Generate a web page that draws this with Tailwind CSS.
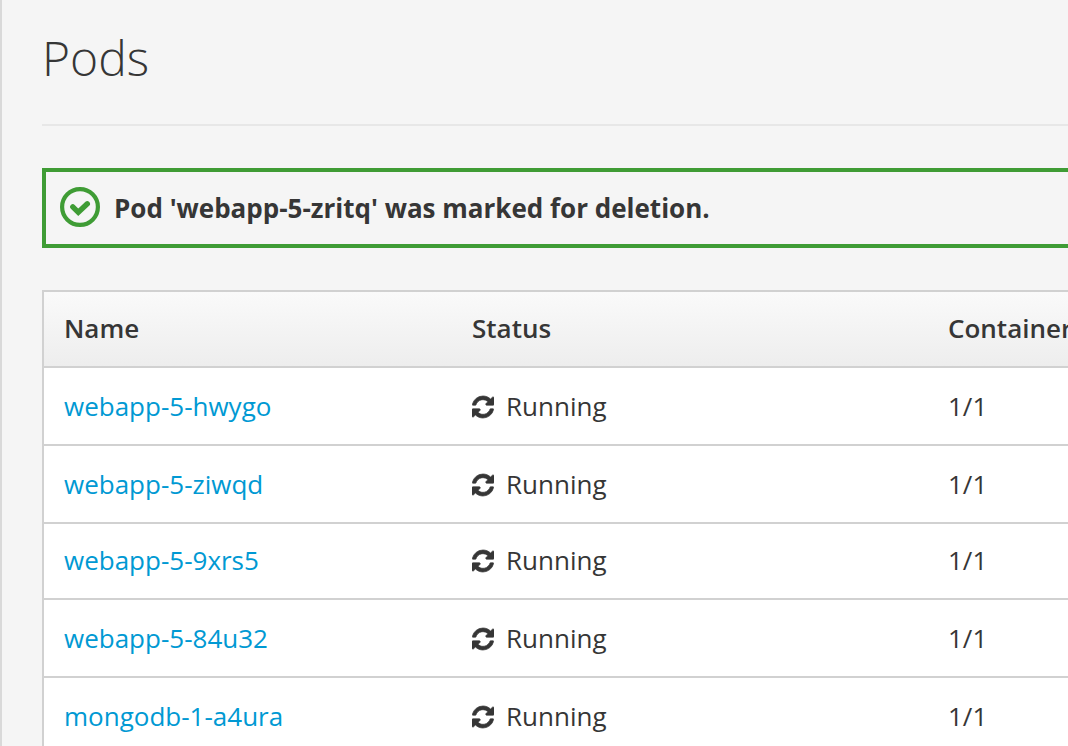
<!DOCTYPE html>
<html lang="en">
<head>
<meta charset="utf-8">
<meta name="viewport" content="width=device-width, initial-scale=1">
<title>Pods</title>
<script src="https://cdn.jsdelivr.net/npm/@tailwindcss/browser@4"></script>
</head>
<body class="h-screen overflow-hidden border-l-2 border-[#d9d9d9] bg-[#f5f5f5] pl-10 font-['Open_Sans','Noto_Sans',sans-serif] text-[26px] leading-9 text-[#363636]">
<svg class="hidden" aria-hidden="true">
  <symbol id="refresh" viewBox="0 0 1536 1792"><path d="M1511 1056q0 5-1 7-64 268-268 434.500T764 1664q-146 0-282.500-55T238 1452l-129 129q-19 19-45 19t-45-19-19-45v-448q0-26 19-45t45-19h448q26 0 45 19t19 45-19 45l-137 137q71 66 161 102t187 36q134 0 250-65t186-179q11-17 53-117 8-23 30-23h192q13 0 22.500 9.500t9.500 22.500zm25-800v448q0 26-19 45t-45 19h-448q-26 0-45-19t-19-45 19-45l138-138Q969 384 768 384q-134 0-250 65T332 628q-11 17-53 117-8 23-30 23H50q-13 0-22.500-9.500T18 736v-7q65-268 270-434.500T768 128q146 0 284 55.500T1297 340l130-129q19-19 45-19t45 19 19 45z" fill="currentColor" stroke="currentColor" stroke-width="50"/></symbol>
</svg>
<main>
  <h1 class="border-b-2 border-[#e7e7e7] pt-[26px] pb-[34px] text-5xl leading-16 font-light">Pods</h1>

  <div role="status" class="mt-[42px] flex h-20 items-start gap-3.5 border-4 border-r-0 border-[#3f9c35] pt-[15px] pl-3.5 leading-[42px] font-bold">
    <svg class="size-10 shrink-0" viewBox="0 0 40 40" fill="none" stroke="#3f9c35" aria-hidden="true">
      <circle cx="20" cy="20" r="17.900" stroke-width="4.200"/>
      <path d="M12.800 19.800L18.300 25.300L27.300 16.800" stroke-width="5.400" stroke-linecap="round"/>
    </svg>
    <p>Pod 'webapp-5-zritq' was marked for deletion.</p>
  </div>

  <table class="mt-[42px] w-full table-fixed border-separate border-spacing-0 border-t-2 border-l-2 border-[#d1d1d1] bg-white text-left">
    <colgroup><col class="w-[408px]"><col class="w-[476px]"><col></colgroup>
    <thead class="whitespace-nowrap">
      <tr class="h-19 bg-linear-to-b from-[#fafafa] to-[#ededed]">
        <th class="border-b-2 border-[#d1d1d1] pb-0.5 pl-5 font-semibold">Name</th>
        <th class="border-b-2 border-[#d1d1d1] pb-0.5 pl-5 font-semibold">Status</th>
        <th class="border-b-2 border-[#d1d1d1] pb-0.5 pl-5 font-semibold">Containers</th>
      </tr>
    </thead>
    <tbody>
      <tr class="h-[78px]">
        <td class="border-b-2 border-[#d1d1d1] pl-5"><a href="#" class="text-[#0099d3]">webapp-5-hwygo</a></td>
        <td class="border-b-2 border-[#d1d1d1] pl-5"><span class="flex items-center gap-3"><svg class="h-7 w-[22px] pt-0.5" aria-hidden="true"><use href="#refresh"/></svg>Running</span></td>
        <td class="border-b-2 border-[#d1d1d1] pl-5">1/1</td>
      </tr>
      <tr class="h-[78px]">
        <td class="border-b-2 border-[#d1d1d1] pl-5"><a href="#" class="text-[#0099d3]">webapp-5-ziwqd</a></td>
        <td class="border-b-2 border-[#d1d1d1] pl-5"><span class="flex items-center gap-3"><svg class="h-7 w-[22px] pt-0.5" aria-hidden="true"><use href="#refresh"/></svg>Running</span></td>
        <td class="border-b-2 border-[#d1d1d1] pl-5">1/1</td>
      </tr>
      <tr class="h-19">
        <td class="border-b-2 border-[#d1d1d1] pb-0.5 pl-5"><a href="#" class="text-[#0099d3]">webapp-5-9xrs5</a></td>
        <td class="border-b-2 border-[#d1d1d1] pb-0.5 pl-5"><span class="flex items-center gap-3"><svg class="h-7 w-[22px] pt-0.5" aria-hidden="true"><use href="#refresh"/></svg>Running</span></td>
        <td class="border-b-2 border-[#d1d1d1] pb-0.5 pl-5">1/1</td>
      </tr>
      <tr class="h-[78px]">
        <td class="border-b-2 border-[#d1d1d1] pl-5"><a href="#" class="text-[#0099d3]">webapp-5-84u32</a></td>
        <td class="border-b-2 border-[#d1d1d1] pl-5"><span class="flex items-center gap-3"><svg class="h-7 w-[22px] pt-0.5" aria-hidden="true"><use href="#refresh"/></svg>Running</span></td>
        <td class="border-b-2 border-[#d1d1d1] pl-5">1/1</td>
      </tr>
      <tr class="h-[78px]">
        <td class="border-b-2 border-[#d1d1d1] pl-5"><a href="#" class="text-[#0099d3]">mongodb-1-a4ura</a></td>
        <td class="border-b-2 border-[#d1d1d1] pl-5"><span class="flex items-center gap-3"><svg class="h-7 w-[22px] pt-0.5" aria-hidden="true"><use href="#refresh"/></svg>Running</span></td>
        <td class="border-b-2 border-[#d1d1d1] pl-5">1/1</td>
      </tr>
    </tbody>
  </table>
</main>
</body>
</html>
